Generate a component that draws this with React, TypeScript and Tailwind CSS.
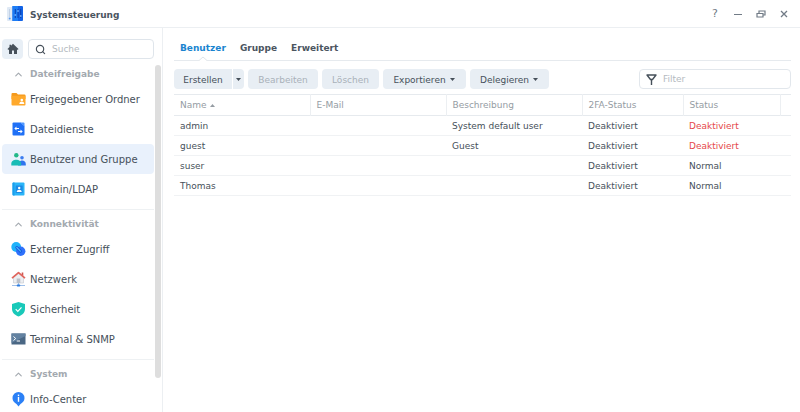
import React, { useState } from "react";
import { ChevronUp, Search } from "lucide-react";

type NavItem = { id: string; label: string; icon: React.ReactNode };

const FolderIcon = () => (
  <svg viewBox="0 0 16 16" className="h-4 w-4">
    <path d="M1.500 3a1 1 0 0 1 1-1h4l1.500 1.500h6.500a1 1 0 0 1 1 1V8h-14z" fill="#f59a1d" />
    <path d="M1.500 4.800h14v8.700a1 1 0 0 1-1 1h-12a1 1 0 0 1-1-1z" fill="#ffa92c" />
    <circle cx="11.800" cy="9" r="1.300" fill="#fff" />
    <path d="M9.300 13c0-3.300 5-3.300 5 0z" fill="#fff" />
  </svg>
);

const FileServiceIcon = () => (
  <svg viewBox="0 0 16 16" className="h-4 w-4">
    <path d="M2.500 2.500a1 1 0 0 1 1-1h7l4 3.500v8.500a1 1 0 0 1-1 1h-10a1 1 0 0 1-1-1z" fill="#1f70f6" />
    <path d="M10 1.500h3.500a1 1 0 0 1 1 1v3z" fill="#4f97ff" />
    <path d="M5.500 7h3.500v1H5.500zM8 10h3.500v1H8z" fill="#fff" />
    <path d="M4.300 7.500 6.500 5.500v4zM12.700 10.500 10.500 8.500v4z" fill="#fff" />
  </svg>
);

const UsersIcon = () => (
  <svg viewBox="0 0 16 16" className="h-4 w-4">
    <circle cx="12" cy="6.800" r="1.800" fill="#3b7cf0" />
    <path d="M8 14.500c0-6.500 7.800-6.500 7.800-1.500v1.500z" fill="#2f74ee" />
    <circle cx="6.300" cy="4.200" r="2.200" fill="#22b888" />
    <path d="M1.300 14.500v-1.700c0-5.300 9.800-5.300 9.800 0v1.700z" fill="#18bcb6" />
  </svg>
);

const DomainIcon = () => (
  <svg viewBox="0 0 16 16" className="h-4 w-4">
    <rect x="2.500" y="1.500" width="12" height="13" rx="1" fill="#2bb5f8" />
    <path d="M2.500 2.500a1 1 0 0 1 1-1h1v13h-1a1 1 0 0 1-1-1z" fill="#1b9dec" />
    <rect x="5.700" y="4.500" width="7" height="7.500" rx=".6" fill="#1c8ae6" />
    <circle cx="9.200" cy="7" r="1.200" fill="#fff" />
    <path d="M6.700 11c0-3 5-3 5 0z" fill="#fff" />
  </svg>
);

const ExternalIcon = () => (
  <svg viewBox="0 0 16 16" className="h-4 w-4">
    <circle cx="6.200" cy="6" r="4.900" fill="#1fb2fa" />
    <circle cx="10.700" cy="10.300" r="4.700" fill="#2e71fb" />
    <path d="M6.800 6.500l3.600 3.600" stroke="#1458d6" strokeWidth="3" strokeLinecap="round" />
    <path d="M6.800 6.500l3.600 3.600" stroke="#49b4ff" strokeWidth="1.200" strokeLinecap="round" />
  </svg>
);

const NetworkIcon = () => (
  <svg viewBox="0 0 16 16" className="h-4 w-4">
    <path d="M3.500 6.500 8.500 2l5 4.500V12h-10z" fill="#eceef1" stroke="#c3c7ce" strokeWidth=".6" />
    <path d="M2 7.200 8.500 1.700 15 7.200" fill="none" stroke="#e0645c" strokeWidth="1.700" strokeLinejoin="round" />
    <path d="M11.700 1.500h1.600v3.300l-1.600-1.400z" fill="#d1564f" />
    <rect x="6.700" y="7.500" width="3.600" height="4.500" fill="#bcc1c9" />
    <path d="M2 14.500h13M8.500 12v2" stroke="#9dbfea" strokeWidth="1" />
    <rect x="6.800" y="13.400" width="3.400" height="2" rx=".6" fill="#2d7de0" />
  </svg>
);

const ShieldIcon = () => (
  <svg viewBox="0 0 16 16" className="h-4 w-4">
    <path d="M8.500 1 15 3v5c0 3.800-3 6.200-6.500 7.500C5 14.200 2 11.800 2 8V3z" fill="#19c9b9" />
    <path d="M5.700 8.200l2.100 2.100 3.700-4" fill="none" stroke="#fff" strokeWidth="1.200" />
  </svg>
);

const TerminalIcon = () => (
  <svg viewBox="0 0 16 16" className="h-4 w-4">
    <rect x="1.500" y="2.500" width="14" height="11" fill="#4a6784" />
    <path d="M1.500 2.500h14V5l-14 7z" fill="#6382a1" />
    <path d="M3.500 5.500l2.200 2-2.200 2M6.700 10H10" fill="none" stroke="#fff" strokeWidth="1" />
  </svg>
);

const InfoIcon = () => (
  <svg viewBox="0 0 16 16" className="h-4 w-4">
    <path d="M8.500 1a6 6 0 0 1 6 6.200c0 3-2.200 4.400-4 5.900l-2 2.300-2-2.300c-1.800-1.500-4-2.900-4-5.900A6 6 0 0 1 8.500 1z" fill="#2b80f6" />
    <rect x="7.800" y="3.600" width="1.400" height="1.500" fill="#fff" />
    <rect x="7.800" y="6" width="1.400" height="4.800" fill="#fff" />
  </svg>
);

const groups: { title: string; items: NavItem[] }[] = [
  {
    title: "Dateifreigabe",
    items: [
      { id: "folder", label: "Freigegebener Ordner", icon: <FolderIcon /> },
      { id: "files", label: "Dateidienste", icon: <FileServiceIcon /> },
      { id: "users", label: "Benutzer und Gruppe", icon: <UsersIcon /> },
      { id: "domain", label: "Domain/LDAP", icon: <DomainIcon /> },
    ],
  },
  {
    title: "Konnektivität",
    items: [
      { id: "external", label: "Externer Zugriff", icon: <ExternalIcon /> },
      { id: "network", label: "Netzwerk", icon: <NetworkIcon /> },
      { id: "security", label: "Sicherheit", icon: <ShieldIcon /> },
      { id: "terminal", label: "Terminal & SNMP", icon: <TerminalIcon /> },
    ],
  },
  {
    title: "System",
    items: [{ id: "info", label: "Info-Center", icon: <InfoIcon /> }],
  },
];

const users = [
  { name: "admin", mail: "", description: "System default user", twoFa: "Deaktiviert", status: "Deaktiviert" },
  { name: "guest", mail: "", description: "Guest", twoFa: "Deaktiviert", status: "Deaktiviert" },
  { name: "suser", mail: "", description: "", twoFa: "Deaktiviert", status: "Normal" },
  { name: "Thomas", mail: "", description: "", twoFa: "Deaktiviert", status: "Normal" },
];

const tabs = ["Benutzer", "Gruppe", "Erweitert"];

const Caret = () => (
  <svg viewBox="0 0 5 3" className="h-[3px] w-[5px] shrink-0">
    <path d="M0 0h5L2.500 3z" fill="currentColor" />
  </svg>
);

function TitleBar() {
  return (
    <header className="flex h-7 shrink-0 items-center border-b border-[#eceff2] pl-[6px] pr-2">
      <svg viewBox="0 0 18 18" className="h-[18px] w-[18px]">
        <rect x="1" y="2" width="7" height="14" rx="1" fill="#dfe9f5" />
        <path d="M3.500 4v8" stroke="#c3d2e6" strokeWidth="1" />
        <circle cx="3.700" cy="13.500" r="1" fill="#5b9cf0" />
        <path d="M6.500 1H16a1 1 0 0 1 1 1v13a1 1 0 0 1-1 1H6.500z" fill="#1263e6" />
        <path d="M6.500 1H12v15H6.500z" fill="#1d7df5" />
        <path d="M9.300 4v9M12 4v9M14.700 4v9" stroke="#0a3fae" strokeWidth="1" />
        <path d="M8.500 10h1.600M11.200 6h1.600M13.900 11h1.600" stroke="#7ab8ff" strokeWidth="1.400" />
      </svg>
      <h1 className="ml-[6px] flex-1 pt-[2px] text-[9px] leading-4 font-bold text-[#4b555f]">Systemsteuerung</h1>
      <div className="flex items-center gap-[7px] text-[#717b86]">
        <button type="button" aria-label="Hilfe" className="flex h-4 w-4 items-center justify-center pt-px text-[11px]">
          ?
        </button>
        <button type="button" aria-label="Minimieren" className="flex h-4 w-4 items-center justify-center">
          <svg viewBox="0 0 10 10" className="h-[10px] w-[10px]">
            <path d="M1 5.500h8" stroke="currentColor" strokeWidth="1" />
          </svg>
        </button>
        <button type="button" aria-label="Wiederherstellen" className="flex h-4 w-4 items-center justify-center">
          <svg viewBox="0 0 10 10" className="h-[10px] w-[10px]">
            <path d="M3 4V2h6v4H7.500M1 4.500h6V8H1z" fill="none" stroke="currentColor" strokeWidth="1.200" />
          </svg>
        </button>
        <button type="button" aria-label="Schließen" className="flex h-4 w-4 items-center justify-center">
          <svg viewBox="0 0 10 10" className="h-[10px] w-[10px]">
            <path d="M2 2l6 6M8 2 2 8" stroke="currentColor" strokeWidth="1.300" />
          </svg>
        </button>
      </div>
    </header>
  );
}

function Sidebar() {
  const [active, setActive] = useState("users");

  return (
    <aside className="flex w-[163px] shrink-0 flex-col border-r border-[#eceff2]">
      <div className="flex gap-[5px] pb-[3px] pl-[2px] pr-2 pt-[11px]">
        <button
          type="button"
          aria-label="Startseite"
          className="flex h-5 w-[21px] items-center justify-center rounded-sm bg-[#e8eff6] text-[#46505a]"
        >
          <svg viewBox="0 0 12 12" className="h-3 w-3">
            <path d="M6 .8 11.500 6l-.8.9L10 6.300V11H7V7.500H5V11H2V6.300l-.7.6L.5 6 2.500 4V1.800H4v.9z" fill="currentColor" />
          </svg>
        </button>
        <label className="flex h-5 min-w-0 flex-1 items-center gap-[6px] rounded-sm border border-[#dfe5eb] pl-[6px]">
          <Search className="h-[11px] w-[11px] shrink-0 text-[#46505a]" strokeWidth={2.5} />
          <input
            type="text"
            aria-label="Suche"
            placeholder="Suche"
            className="w-full min-w-0 pt-[2px] text-[9px] outline-none placeholder:text-[#b4bac0]"
          />
        </label>
      </div>
      <div className="flex min-h-0 flex-1 overflow-hidden">
        <nav className="min-w-0 flex-1 pl-[2px]">
          {groups.map((group, i) => (
            <section key={group.title} className={i > 0 ? "border-t border-[#eef1f3] pt-[2px]" : ""}>
              <h2 className="flex h-[22px] items-center gap-[6px] pl-[11px] pt-[2px] text-[9px] leading-4 font-bold text-[#a3a9af]">
                <ChevronUp className="h-[11px] w-[11px]" strokeWidth={2.5} />
                {group.title}
              </h2>
              <ul className="pb-[5px]">
                {group.items.map((item) => (
                  <li key={item.id}>
                    <button
                      type="button"
                      onClick={() => setActive(item.id)}
                      className={`flex h-[30px] w-full items-center gap-1 whitespace-nowrap rounded-sm pl-2 text-left text-[10px] text-[#46505a] ${
                        active === item.id ? "bg-[#e9f1fc]" : ""
                      }`}
                    >
                      {item.icon}
                      {item.label}
                    </button>
                  </li>
                ))}
              </ul>
            </section>
          ))}
        </nav>
        <div className="flex w-2 flex-col px-px py-[3px]">
          <div className="h-[313px] rounded-full bg-[#dedede]" />
        </div>
      </div>
    </aside>
  );
}

function Toolbar() {
  return (
    <div className="flex items-center gap-1 pb-[5px] pt-2 text-[9px] leading-3 text-[#46505a]">
      <div className="flex gap-px">
        <button type="button" className="h-5 w-[58px] rounded-l-sm bg-[#e8eef4] pt-px">
          Erstellen
        </button>
        <button type="button" aria-label="Weitere Optionen" className="flex h-5 w-[11px] items-center justify-center rounded-r-sm bg-[#e8eef4]">
          <Caret />
        </button>
      </div>
      <button type="button" disabled className="h-5 w-[70px] rounded-sm bg-[#e8eef4] pt-px text-[#a9b1b9]">
        Bearbeiten
      </button>
      <button type="button" disabled className="h-5 w-[57px] rounded-sm bg-[#e8eef4] pt-px text-[#a9b1b9]">
        Löschen
      </button>
      <button type="button" className="flex h-5 w-[83px] items-center justify-center gap-1 rounded-sm bg-[#e8eef4] pr-px pt-px">
        Exportieren
        <Caret />
      </button>
      <button type="button" className="flex h-5 w-[79px] items-center justify-center gap-1 rounded-sm bg-[#e8eef4] pr-px pt-px">
        Delegieren
        <Caret />
      </button>
      <label className="ml-auto flex h-5 w-[152px] items-center gap-[6px] rounded-sm border border-[#e2e7ec] pl-[6px]">
        <svg viewBox="0 0 11 11" className="h-[11px] w-[11px] shrink-0">
          <path d="M1 1h9L6.500 5.500H4.500zM5.500 5.500V11" fill="none" stroke="#46505a" strokeWidth="1.400" strokeLinejoin="round" />
        </svg>
        <input
          type="text"
          aria-label="Filter"
          placeholder="Filter"
          className="w-full min-w-0 text-[9px] outline-none placeholder:text-[#b4bac0]"
        />
      </label>
    </div>
  );
}

function UserTable() {
  return (
    <table className="w-full table-fixed border-collapse text-left text-[9px] leading-4 text-[#46505a]">
      <colgroup>
        <col />
        <col />
        <col />
        <col className="w-[101px]" />
        <col className="w-[97px]" />
        <col className="w-[11px]" />
      </colgroup>
      <thead>
        <tr className="h-[21px] border-y border-[#e6eaee] text-[#959ca3]">
          <th className="border-r border-[#eceff2] px-[6px] font-normal">
            <span className="flex items-center gap-[3px]">
              Name
              <svg viewBox="0 0 5 3" className="h-[3px] w-[5px]">
                <path d="M0 3h5L2.500 0z" fill="currentColor" />
              </svg>
            </span>
          </th>
          <th className="border-r border-[#eceff2] px-[6px] font-normal">E-Mail</th>
          <th className="border-r border-[#eceff2] px-[6px] font-normal">Beschreibung</th>
          <th className="border-r border-[#eceff2] px-[6px] font-normal">2FA-Status</th>
          <th className="border-r border-[#eceff2] px-[6px] font-normal">Status</th>
          <td />
        </tr>
      </thead>
      <tbody>
        {users.map((user) => (
          <tr key={user.name} className="h-5 border-b border-[#f0f2f4]">
            <td className="px-[6px]">{user.name}</td>
            <td className="px-[6px]">{user.mail}</td>
            <td className="px-[6px]">{user.description}</td>
            <td className="px-[6px]">{user.twoFa}</td>
            <td className={`px-[6px] ${user.status === "Deaktiviert" ? "text-[#e5484a]" : ""}`}>{user.status}</td>
            <td />
          </tr>
        ))}
      </tbody>
    </table>
  );
}

export default function App() {
  const [tab, setTab] = useState("Benutzer");

  return (
    <div className="flex h-screen flex-col overflow-hidden bg-white font-['DejaVu_Sans',sans-serif]">
      <TitleBar />
      <div className="flex min-h-0 flex-1">
        <Sidebar />
        <main className="min-w-0 flex-1 pl-[11px] pr-[9px]">
          <div role="tablist" className="flex h-[33px] gap-[14px] border-b border-[#e6eaee] px-[6px] pt-2">
            {tabs.map((t) => (
              <button
                key={t}
                type="button"
                role="tab"
                aria-selected={tab === t}
                onClick={() => setTab(t)}
                className={`relative text-[9px] leading-4 font-bold ${tab === t ? "text-[#1a84cf]" : "text-[#4b555f]"}`}
              >
                {t}
                {tab === t && (
                  <svg viewBox="0 0 8 5" className="absolute -bottom-px left-1/2 h-[5px] w-2 -translate-x-1/2">
                    <path d="M0 4.500 4 1l4 3.500V5H0z" fill="#fff" />
                    <path d="M0 4.500 4 1l4 3.500" fill="none" stroke="#dfe4e9" />
                  </svg>
                )}
              </button>
            ))}
          </div>
          <Toolbar />
          <UserTable />
        </main>
      </div>
    </div>
  );
}
